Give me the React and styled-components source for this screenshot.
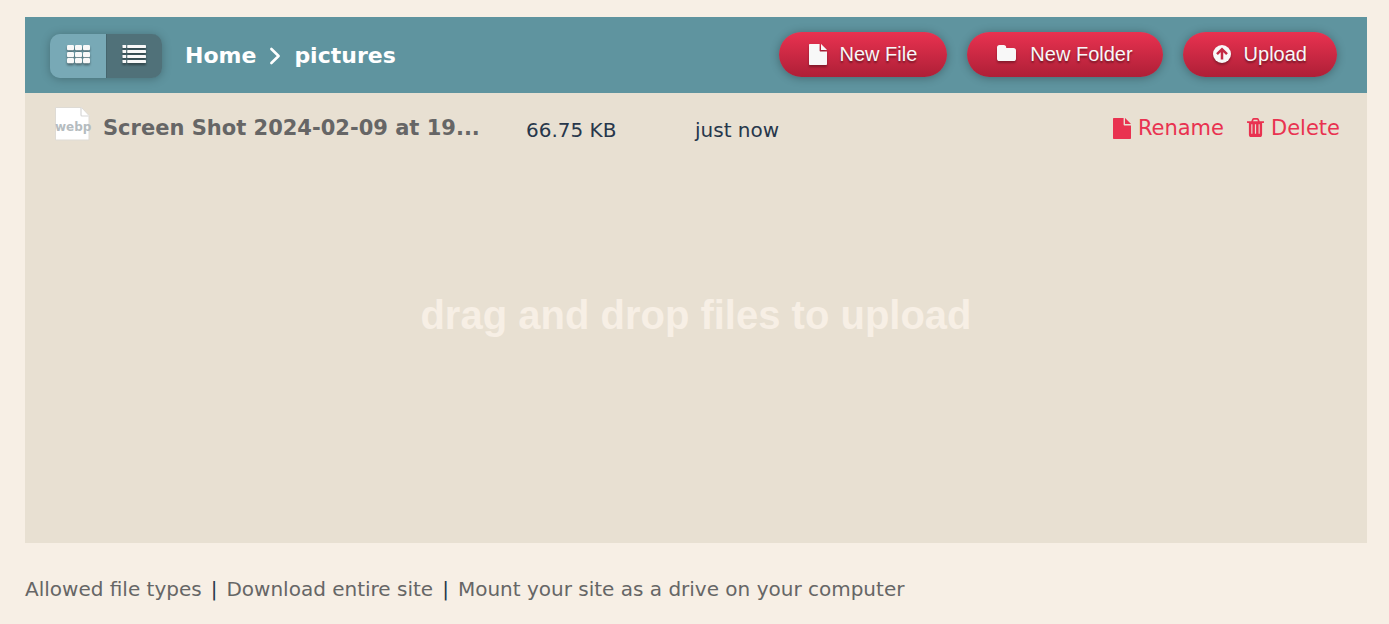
import React, { useState } from "react";
import styled, { createGlobalStyle } from "styled-components";

const GlobalStyle = createGlobalStyle`
  * {
    box-sizing: border-box;
  }

  body {
    margin: 0;
    background: #f7efe5;
    color: #27374b;
    font-family: "DejaVu Sans", Verdana, sans-serif;
    font-size: 20px;
    line-height: 28px;
  }
`;

const Page = styled.div`
  padding: 17px 22px 16px 25px;
`;

const Header = styled.header`
  display: flex;
  align-items: center;
  min-height: 76px;
  padding: 0 30px 0 25px;
  background: #5f949f;
`;

const ViewToggle = styled.div`
  display: flex;
  margin-top: 2px;
  border-radius: 10px;
  box-shadow: 0 1px 10px rgba(0, 0, 0, 0.25);
`;

const ViewButton = styled.button`
  display: flex;
  align-items: center;
  justify-content: center;
  width: 56px;
  height: 44px;
  padding: 0 0 4px;
  border: 0;
  border-radius: ${({ $side }) => ($side === "left" ? "10px 0 0 10px" : "0 10px 10px 0")};
  background: ${({ $active }) => ($active ? "#507179" : "#78a9b6")};
  box-shadow: ${({ $active }) => ($active ? "inset 1px 0 0 #45656d" : "none")};
  color: #f8f8f8;
  cursor: pointer;

  svg {
    filter: drop-shadow(0 2px 1px rgba(0, 0, 0, 0.4));
  }
`;

const Breadcrumbs = styled.nav`
  display: flex;
  align-items: center;
  gap: 13px;
  margin-left: 23px;
  padding-top: 2px;
  color: #fff;
  font-size: 22px;
  font-weight: bold;
`;

const Crumb = styled.a`
  color: #fff;
  text-decoration: none;
`;

const Actions = styled.div`
  display: flex;
  gap: 20px;
  margin-left: auto;
  padding-bottom: 2px;
`;

const ActionButton = styled.button`
  display: flex;
  align-items: center;
  gap: 13px;
  height: 45px;
  padding: 0 30px;
  border: 0;
  border-radius: 23px;
  background: linear-gradient(#e93250, #ae1f37);
  box-shadow: 0 1px 10px rgba(0, 0, 0, 0.3);
  color: #f8f8f8;
  font-family: "Liberation Sans", Arial, sans-serif;
  font-size: 20px;
  text-shadow: 0 2px 2px rgba(0, 0, 0, 0.4);
  white-space: nowrap;
  cursor: pointer;

  svg {
    filter: drop-shadow(0 2px 1px rgba(0, 0, 0, 0.3));
  }
`;

const FileArea = styled.main`
  display: flex;
  flex-direction: column;
  min-height: 450px;
  background: #e8e0d2;
`;

const FileRow = styled.div`
  display: flex;
  align-items: center;
  height: 70px;
  padding: 0 27px 0 30px;
`;

const FileIcon = styled.div`
  display: grid;
  place-items: center;
  width: 36px;
  margin: 0 12px 8px 0;
  color: #b5bcc0;
  font-size: 12px;
  font-weight: bold;

  svg,
  span {
    grid-area: 1 / 1;
  }

  svg {
    justify-self: start;
  }

  span {
    padding-top: 6px;
  }
`;

const FileName = styled.a`
  min-width: 379px;
  color: #666;
  font-size: 21px;
  font-weight: bold;
  text-decoration: none;
  white-space: nowrap;
`;

const FileMeta = styled.span`
  width: ${({ $width }) => $width}px;
  padding-top: 4px;
`;

const FileSize = styled(FileMeta)`
  margin-left: 44px;
`;

const RowActions = styled.div`
  display: flex;
  gap: 23px;
  margin-left: auto;
`;

const RowButton = styled.button`
  display: flex;
  align-items: center;
  gap: 7px;
  padding: 0;
  border: 0;
  background: none;
  color: #e93250;
  font: inherit;
  font-size: 21px;
  cursor: pointer;
`;

const DropHint = styled.div`
  margin-top: 128px;
  color: #f7efe5;
  font-family: "Liberation Sans", Arial, sans-serif;
  font-size: 40px;
  font-weight: bold;
  line-height: 48px;
  text-align: center;
`;

const Footer = styled.footer`
  display: flex;
  flex-wrap: wrap;
  gap: 9px;
  margin-top: 32px;
`;

const FooterLink = styled.a`
  color: #666;
  text-decoration: none;
`;

const GridIcon = () => (
  <svg width="24" height="19" viewBox="0 0 24 19" fill="currentColor" aria-hidden="true">
    {[0, 7, 13].map((y) =>
      [0, 8, 16].map((x) => (
        <rect key={`${x}-${y}`} x={x + 1} y={y} width="7" height="5.2" rx="1.2" />
      ))
    )}
  </svg>
);

const ListIcon = () => (
  <svg width="24" height="18" viewBox="0 0 24 18" fill="currentColor" aria-hidden="true">
    {[0, 5, 10, 15].map((y) => (
      <React.Fragment key={y}>
        <rect x="0.5" y={y} width="3.7" height="3" rx="0.4" />
        <rect x="5.2" y={y} width="18.8" height="3" rx="0.4" />
      </React.Fragment>
    ))}
  </svg>
);

const AngleIcon = () => (
  <svg width="12" height="18" viewBox="0 0 12 18" fill="none" aria-hidden="true">
    <path d="M2.4 2 9.6 9 2.4 16" stroke="currentColor" strokeWidth="2.6" strokeLinecap="round" strokeLinejoin="round" />
  </svg>
);

const PageIcon = () => (
  <svg width="18" height="21" viewBox="0 0 18 21" fill="currentColor" aria-hidden="true">
    <path d="M0 1C0 .4.4 0 1 0H10.6V6.4C10.6 7 11 7.4 11.6 7.4H18V20C18 20.6 17.6 21 17 21H1C.4 21 0 20.6 0 20Z" />
    <path d="M12 .1C12.3.3 12.6.5 12.8.7L17.3 5.2C17.5 5.4 17.7 5.7 17.9 6H12Z" />
  </svg>
);

const FolderIcon = () => (
  <svg width="20" height="20" viewBox="0 0 20 20" fill="currentColor" aria-hidden="true">
    <path d="M0 3.6A2.6 2.6 0 0 1 2.6 1H6.6A2.6 2.6 0 0 1 9.2 3.6V4H16.4A2.6 2.6 0 0 1 19 6.6V14.4A2.6 2.6 0 0 1 16.4 17H2.6A2.6 2.6 0 0 1 0 14.4Z" />
  </svg>
);

const UploadIcon = () => (
  <svg width="18" height="18" viewBox="0 0 18 18" aria-hidden="true">
    <circle cx="9" cy="9" r="9" fill="currentColor" />
    <path d="M4 9.2 9 4.2 14 9.2M9 4.6V14.6" fill="none" stroke="#c32a44" strokeWidth="2.5" />
  </svg>
);

const TrashIcon = () => (
  <svg width="17" height="20" viewBox="0 0 17 20" fill="currentColor" aria-hidden="true">
    <path
      fillRule="evenodd"
      d="M.4 3.2H4.3L5.2 1.1C5.5.4 6 0 6.8 0H10.2C11 0 11.5.4 11.8 1.1L12.7 3.2H16.6C16.8 3.2 17 3.4 17 3.6V4.4C17 4.7 16.8 4.9 16.6 4.9H15.1V16.4C15.1 18 14.3 19 13.1 19H3.9C2.7 19 1.9 18 1.9 16.4V4.9H.4C.2 4.9 0 4.7 0 4.4V3.6C0 3.4.2 3.2.4 3.2ZM6.1 3.2H10.9L10.3 1.7H6.7ZM4.3 6.3V15.8H5.4V6.3ZM7.9 6.3V15.8H9.1V6.3ZM11.6 6.3V15.8H12.7V6.3Z"
    />
  </svg>
);

const BlankFileIcon = () => (
  <svg width="35" height="34" viewBox="0 0 35 34" aria-hidden="true">
    <path d="M.5.5H26.5L34 8.5V33H.5Z" fill="#fff" stroke="#dedbd5" />
    <path d="M26 1V8C26 8.6 26.4 9 27 9H33.5" fill="none" stroke="#d6d6d6" strokeWidth="1.2" />
  </svg>
);

const actions = [
  { label: "New File", Icon: PageIcon },
  { label: "New Folder", Icon: FolderIcon },
  { label: "Upload", Icon: UploadIcon },
];

const files = [
  {
    name: "Screen Shot 2024-02-09 at 19...",
    type: "webp",
    size: "66.75 KB",
    updated: "just now",
  },
];

const App = () => {
  const [view, setView] = useState("list");

  return (
    <>
      <GlobalStyle />
      <Page>
        <Header>
          <ViewToggle>
            <ViewButton
              type="button"
              aria-label="Grid view"
              $side="left"
              $active={view === "grid"}
              onClick={() => setView("grid")}
            >
              <GridIcon />
            </ViewButton>
            <ViewButton
              type="button"
              aria-label="List view"
              $side="right"
              $active={view === "list"}
              onClick={() => setView("list")}
            >
              <ListIcon />
            </ViewButton>
          </ViewToggle>
          <Breadcrumbs>
            <Crumb href="#home">Home</Crumb>
            <AngleIcon />
            <span>pictures</span>
          </Breadcrumbs>
          <Actions>
            {actions.map(({ label, Icon }) => (
              <ActionButton key={label} type="button">
                <Icon />
                {label}
              </ActionButton>
            ))}
          </Actions>
        </Header>

        <FileArea>
          {files.map((file) => (
            <FileRow key={file.name}>
              <FileIcon>
                <BlankFileIcon />
                <span>{file.type}</span>
              </FileIcon>
              <FileName href="#file">{file.name}</FileName>
              <FileSize $width={169}>{file.size}</FileSize>
              <FileMeta $width={200}>{file.updated}</FileMeta>
              <RowActions>
                <RowButton type="button">
                  <PageIcon />
                  Rename
                </RowButton>
                <RowButton type="button">
                  <TrashIcon />
                  Delete
                </RowButton>
              </RowActions>
            </FileRow>
          ))}
          <DropHint>drag and drop files to upload</DropHint>
        </FileArea>

        <Footer>
          <FooterLink href="#types">Allowed file types</FooterLink>
          <span>|</span>
          <FooterLink href="#download">Download entire site</FooterLink>
          <span>|</span>
          <FooterLink href="#mount">Mount your site as a drive on your computer</FooterLink>
        </Footer>
      </Page>
    </>
  );
};

export default App;
